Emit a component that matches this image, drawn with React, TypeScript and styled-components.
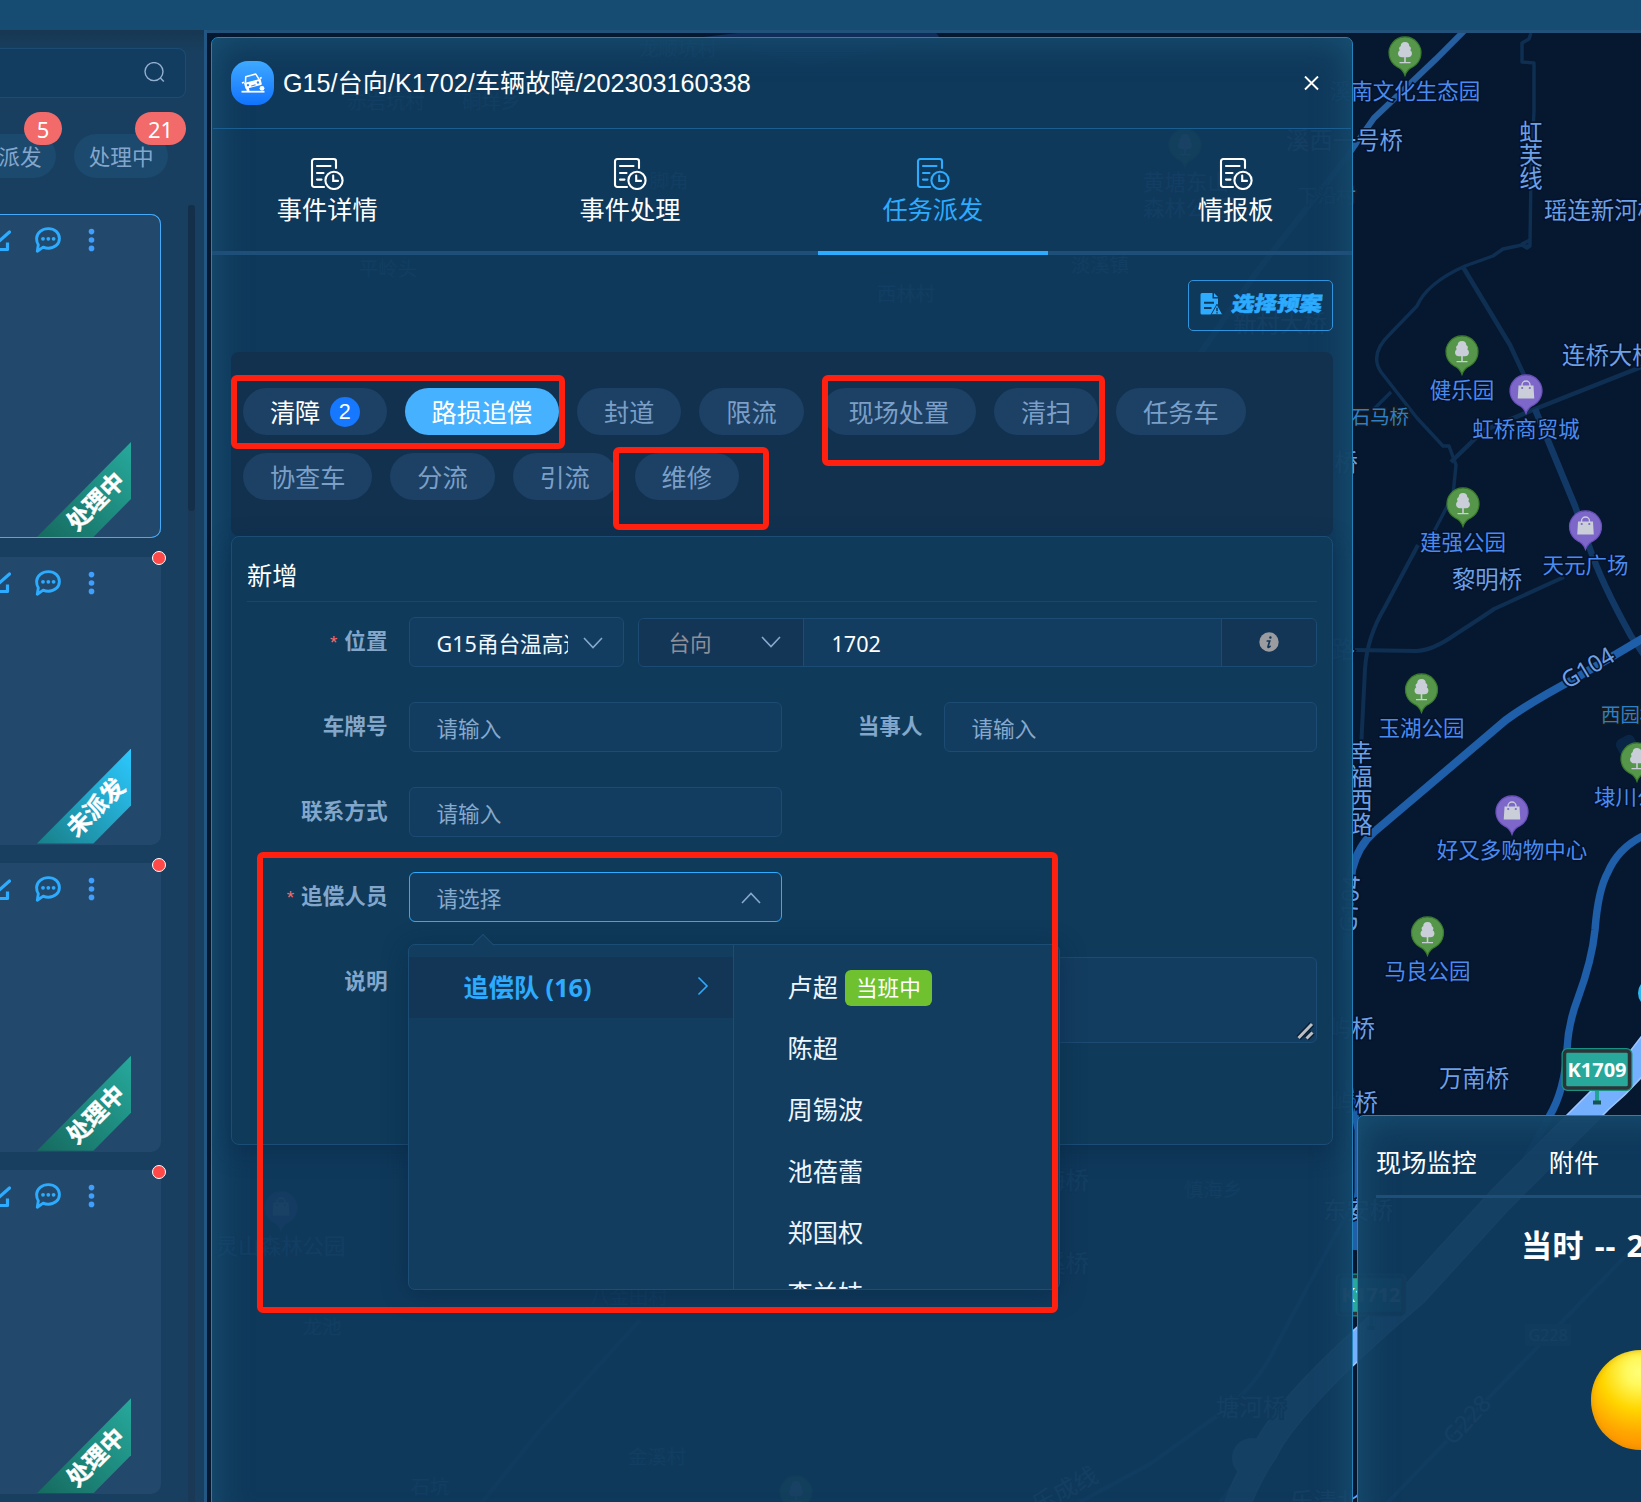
import React from "react";
import styled, { createGlobalStyle, css } from "styled-components";

const CJK = `"Noto Sans", "Noto Sans CJK SC", sans-serif`;
const ARIAL = `"Liberation Sans", "Noto Sans CJK SC", sans-serif`;

const GlobalStyle = createGlobalStyle`
  * { box-sizing: border-box; }
  body { margin: 0; background: #061830; font-family: ${CJK}; color: #fff; }
`;

/* ---------- page frame ---------- */

const Page = styled.div`
  position: relative;
  display: flex;
  flex-direction: column;
  width: 1641px;
  height: 1502px;
  overflow: hidden;
`;

const TopBar = styled.header`
  flex: none;
  height: 30px;
  background: #164b72;
`;

const Body = styled.div`
  flex: 1;
  display: flex;
  min-height: 0;
`;

/* ---------- sidebar ---------- */

const Sidebar = styled.aside`
  flex: none;
  display: flex;
  flex-direction: column;
  width: 207px;
  border-right: 3px solid #225784;
  background: linear-gradient(#173753 0, #183f5f 22px);
  overflow: hidden;
`;

const SearchBox = styled.div`
  flex: none;
  display: flex;
  align-items: center;
  justify-content: flex-end;
  width: 186px;
  height: 50px;
  margin-top: 18px;
  padding-right: 20px;
  padding-bottom: 1px;
  border: 1px solid #1c4c74;
  border-left: 0;
  border-radius: 0 8px 8px 0;
  background: #133d60;
`;

const StatusRow = styled.div`
  flex: none;
  display: flex;
  gap: 18px;
  margin: 36px 0 0 -26px;
`;

const StatusPill = styled.div<{ $w: number }>`
  position: relative;
  width: ${(p) => p.$w}px;
  height: 44px;
  padding-right: 14.500px;
  border-radius: 22px;
  background: #1c496e;
  color: #84a6cc;
  font-size: 21.6px;
  line-height: 46px;
  text-align: right;
  white-space: nowrap;
`;

const CountBadge = styled.span<{ $w: number; $right: number }>`
  position: absolute;
  top: -22px;
  right: ${(p) => p.$right}px;
  width: ${(p) => p.$w}px;
  height: 33px;
  border-radius: 17px;
  background: #f26a6a;
  color: #fff;
  font-size: 22px;
  line-height: 34px;
  text-align: center;
`;

const ListArea = styled.div`
  flex: 1;
  display: flex;
  justify-content: space-between;
  min-height: 0;
  padding-right: 9px;
  margin-top: 27px;
`;

const CardList = styled.div`
  display: flex;
  flex-direction: column;
  gap: 18.6px;
  padding-top: 9px;
`;

const Card = styled.article<{ $h: number; $active?: boolean }>`
  position: relative;
  flex: none;
  width: 161px;
  height: ${(p) => p.$h}px;
  border-radius: 0 10px 10px 0;
  background: #22496c;
  ${(p) =>
    p.$active &&
    css`
      box-shadow: inset -1px 0 0 #45aaf8, inset 0 1px 0 #45aaf8, inset 0 -1px 0 #45aaf8;
    `}
`;

const CardTools = styled.div`
  display: flex;
  align-items: center;
  gap: 24px;
  height: 52px;
  margin-left: -13px;
`;

const Ribbon = styled.div<{ $kind: "doing" | "todo" }>`
  position: absolute;
  left: 37px;
  bottom: 1px;
  display: flex;
  align-items: center;
  justify-content: center;
  width: 94px;
  height: 95px;
  overflow: hidden;
  clip-path: polygon(0 100%, 100% 0, 100% 60%, 60% 100%);
  background: ${(p) =>
    p.$kind === "doing"
      ? "linear-gradient(45deg, #166a5f, #26a99c)"
      : "linear-gradient(45deg, #187f88, #2cc8ff)"};
`;

const RibbonText = styled.span`
  font-size: 23.500px;
  font-weight: 700;
  line-height: 24px;
  white-space: nowrap;
  -webkit-text-stroke: 0.4px #fff;
  transform: translate(11px, 11px) rotate(-45deg);
`;

const AlertDot = styled.i`
  position: absolute;
  top: -5.500px;
  right: -5px;
  width: 14px;
  height: 14px;
  border: 1.4px solid #fff;
  border-radius: 50%;
  background: #ff4949;
`;

const ScrollTrack = styled.div`
  width: 7px;
  background: #193956;
`;

const ScrollThumb = styled.div`
  height: 306px;
  border-radius: 4px;
  background: #142f49;
`;

/* ---------- stage ---------- */

const Stage = styled.main`
  position: relative;
  flex: 1;
  border-top: 3px solid #22517a;
  overflow: hidden;
`;

const MapCanvas = styled.svg`
  position: absolute;
  inset: 0;
  width: 1434px;
  height: 1469px;
`;

const Panel = styled.section<{ $x: number; $y: number; $w: number; $h: number }>`
  position: absolute;
  left: ${(p) => p.$x}px;
  top: ${(p) => p.$y}px;
  width: ${(p) => p.$w}px;
  height: ${(p) => p.$h}px;
  border: 1px solid #2583bb;
  border-radius: 7px;
  background: rgba(16, 59, 93, 0.955);
  box-shadow: inset 0 0 36px #1a5578;
`;

const DialogHead = styled.div`
  display: flex;
  align-items: center;
  height: 91px;
  padding: 0 32px 0 18px;
  margin: 0 1px;
  border-bottom: 1px solid #1b5e91;
`;

const HeadIcon = styled.div`
  display: flex;
  align-items: center;
  justify-content: center;
  width: 43px;
  height: 44px;
  border-radius: 17px;
  background: linear-gradient(#3fa9ff, #1173ff);
`;

const HeadTitle = styled.h1`
  flex: 1;
  margin: 0 0 0 9px;
  font: 400 25.2px/36px ${ARIAL};
`;

const Tabs = styled.nav`
  display: flex;
  gap: 72.4px;
  height: 126px;
  box-shadow: inset 0 -4px 0 #1e4f78;
  overflow: hidden;
`;

const Tab = styled.button<{ $active?: boolean }>`
  flex: none;
  display: flex;
  flex-direction: column;
  align-items: center;
  width: 230.4px;
  padding: 28px 0 0;
  border: 0;
  border-bottom: 4px solid ${(p) => (p.$active ? "#2dabff" : "transparent")};
  background: none;
  color: ${(p) => (p.$active ? "#2dabff" : "#fff")};
  font: 400 25.2px/36px ${CJK};
`;

const TabLabel = styled.span`
  margin-top: 1px;
`;

const Toolbar = styled.div`
  display: flex;
  justify-content: flex-end;
  padding: 25px 19px 21px;
`;

const PlanButton = styled.button`
  display: flex;
  align-items: center;
  gap: 9px;
  width: 145px;
  height: 51px;
  padding: 0 0 4px 11px;
  border: 1px solid #2f93de;
  border-radius: 5px;
  background: none;
  color: #2dabff;
  font: 900 22.6px/30px ${CJK};
  white-space: nowrap;
`;

const PlanText = styled.span`
  -webkit-text-stroke: 0.6px #2dabff;
  transform: skewX(-10deg) scaleY(0.9);
`;

const TagTray = styled.div`
  display: flex;
  flex-wrap: wrap;
  align-content: flex-start;
  gap: 18px;
  height: 184px;
  margin: 0 19px;
  padding: 36px 12px 0;
  border-radius: 8px;
  background: #11314f;
`;

const TagPill = styled.button<{ $tone?: "active" | "lit" }>`
  display: flex;
  align-items: center;
  gap: 9.500px;
  height: 47px;
  padding: 0 26.900px;
  border: 0;
  border-radius: 24px;
  background: ${(p) => (p.$tone === "active" ? "#45b1ff" : "#1c4165")};
  color: ${(p) => (p.$tone ? "#fff" : "#7b9fc7")};
  font: 400 25.2px/46px ${CJK};
  white-space: nowrap;
`;

const TagCount = styled.span`
  width: 30px;
  height: 30px;
  border-radius: 15px;
  background: #1677ff;
  font: 400 21.6px/30px ${ARIAL};
  text-align: center;
`;

/* ---------- form ---------- */

const FormCard = styled.div`
  height: 609px;
  margin: 0 19px;
  padding: 0 15px;
  border: 1px solid #1c4d75;
  border-radius: 8px;
  background: #0f3a5a;
  box-shadow: 0 7px 22px rgba(10, 40, 70, 0.5);
`;

const FormTitle = styled.h2`
  height: 65px;
  margin: 0 0 15px;
  border-bottom: 1px solid #1a4769;
  font-size: 25.2px;
  font-weight: 400;
  line-height: 76px;
`;

const FormRow = styled.div`
  display: flex;
  margin-bottom: 35px;
`;

const Field = styled.div<{ $wide?: boolean }>`
  display: flex;
  gap: 21px;
  width: ${(p) => (p.$wide ? 1070 : 535)}px;
`;

const Label = styled.label<{ $required?: boolean }>`
  flex: none;
  width: 140.500px;
  color: #83a7ca;
  font-size: 21.6px;
  font-weight: 700;
  line-height: 48px;
  text-align: right;
  ${(p) =>
    p.$required &&
    css`
      &::before {
        content: "*";
        margin-right: 7px;
        color: #f56c6c;
        font: 400 19px/20px ${ARIAL};
      }
    `}
`;

const Control = styled.div<{ $open?: boolean; $tall?: boolean }>`
  position: relative;
  flex: 1;
  display: flex;
  align-items: center;
  justify-content: space-between;
  height: ${(p) => (p.$tall ? 86 : 50)}px;
  padding: 1px 20px 0 27px;
  border: 1px solid ${(p) => (p.$open ? "#2dabff" : "#1c4b73")};
  border-radius: 6px;
  background: #133d60;
  color: #86a9cd;
  font-size: 21.6px;
`;

const LocationGroup = styled.div`
  flex: 1;
  display: flex;
  gap: 14px;
`;

const RoadSelect = styled(Control)`
  flex: none;
  width: 215px;
  color: #f2f8ff;
`;

const Clip = styled.span`
  width: 131px;
  overflow: hidden;
  white-space: nowrap;
`;

const Joined = styled.div`
  flex: 1;
  display: flex;
  height: 49px;
  margin-top: 1px;
  border: 1px solid #1c4b73;
  border-radius: 6px;
  background: #133d60;
  overflow: hidden;
  font-size: 21.6px;
`;

const Prepend = styled.div`
  display: flex;
  align-items: center;
  justify-content: space-between;
  width: 165px;
  padding: 0 22px 2px 30px;
  border-right: 1px solid #1c4b73;
  background: #133657;
  color: #8d8f98;
`;

const Mileage = styled.div`
  flex: 1;
  padding-left: 28px;
  line-height: 49px;
`;

const Append = styled.div`
  display: flex;
  align-items: center;
  justify-content: center;
  width: 95px;
  padding-bottom: 2px;
  border-left: 1px solid #1c4b73;
  background: #133657;
`;

const Grip = styled.svg`
  position: absolute;
  right: 0;
  bottom: 1px;
`;

/* ---------- cascader ---------- */

const Cascader = styled.div`
  position: absolute;
  z-index: 3;
  left: -2px;
  top: 71px;
  display: flex;
  width: 652px;
  height: 346px;
  border: 1px solid #1c4d75;
  border-radius: 7px;
  background: #133d5f;
  box-shadow: 0 4px 26px rgba(9, 34, 60, 0.45);
  color: #eef6ff;
  font-size: 25.2px;
  &::before {
    content: "";
    position: absolute;
    left: 66px;
    top: -8px;
    width: 15px;
    height: 15px;
    border: 1px solid #1c4d75;
    border-right: 0;
    border-bottom: 0;
    background: linear-gradient(135deg, #133d5f 50%, transparent 50%);
    transform: rotate(45deg);
  }
`;

const TeamColumn = styled.div`
  width: 325px;
  padding-top: 12px;
  border-right: 1px solid #1c4d75;
`;

const TeamItem = styled.div`
  display: flex;
  align-items: center;
  justify-content: space-between;
  height: 61px;
  padding: 0 20px 3px 55px;
  background: #133657;
  color: #2dabff;
  font-weight: 700;
`;

const PersonColumn = styled.div`
  flex: 1;
  padding-top: 12px;
  overflow: hidden;
`;

const Person = styled.div`
  display: flex;
  align-items: center;
  gap: 7px;
  height: 61.2px;
  padding-left: 54px;
  line-height: 61px;
`;

const DutyTag = styled.span`
  width: 87px;
  height: 36px;
  border-radius: 6px;
  background: #6fc130;
  font-size: 21.6px;
  line-height: 36px;
  text-align: center;
  color: #fff;
`;

/* ---------- monitor panel ---------- */

const MonitorTabs = styled.div`
  display: flex;
  gap: 72px;
  height: 82px;
  margin-left: 18px;
  border-bottom: 3px solid #1e4f78;
  font-size: 25.2px;
  line-height: 92px;
  white-space: nowrap;
`;

const WeatherTitle = styled.div`
  margin: 27px 0 0 163px;
  font-size: 31px;
  font-weight: 700;
  line-height: 40px;
  letter-spacing: 0.6px;
  word-spacing: 2px;
  white-space: nowrap;
`;

const Sun = styled.div`
  width: 100px;
  height: 100px;
  margin: 85px 0 0 233px;
  border-radius: 50%;
  background: radial-gradient(circle at 48% 22%, #ffff78 0, #fff95c 14%, #ffd600 40%, #ffa600 66%, #ff9500 80%, #ee9000 100%);
  box-shadow: inset 0 0 6px rgba(190, 140, 0, 0.55);
`;

/* ---------- annotations ---------- */

const Mark = styled.div<{ $x: number; $y: number; $w: number; $h: number }>`
  position: absolute;
  z-index: 10;
  left: ${(p) => p.$x}px;
  top: ${(p) => p.$y}px;
  width: ${(p) => p.$w}px;
  height: ${(p) => p.$h}px;
  border: 6px solid #ff2010;
  border-radius: 6px;
  pointer-events: none;
`;

/* ---------- icons ---------- */

const SearchIcon = () => (
  <svg width="21" height="21" viewBox="0 0 21 21" fill="none" stroke="#93b0d0" strokeWidth="1.4">
    <circle cx="10" cy="9.6" r="9" />
    <path d="M16.4 16l3.4 3.6" />
  </svg>
);

const EditIcon = () => (
  <svg width="24" height="25" viewBox="0 0 24 25" fill="none" stroke="#2dabff" strokeWidth="3.200">
    <path d="M12 4H4v17.500h16.500v-7" strokeLinejoin="round" />
    <path d="M10.500 14.500L22.500 4" strokeLinecap="round" />
  </svg>
);

const ChatIcon = () => (
  <svg width="26" height="26" viewBox="0 0 26 26">
    <path
      d="M13.400 1.600C19.600 1.600 24.400 5.700 24.400 11.400S19.600 21.200 13.400 21.200c-2 0-3.700-.4-5.200-1.100L2.300 24.200l1-6.400C2.200 16 1.600 13.800 1.600 11.400 1.800 5.700 7.200 1.600 13.400 1.600z"
      fill="none"
      stroke="#2dabff"
      strokeWidth="2.9"
      strokeLinejoin="round"
    />
    <g fill="#2dabff">
      <circle cx="8" cy="11.800" r="1.900" />
      <circle cx="13.300" cy="11.800" r="1.900" />
      <circle cx="18.600" cy="11.800" r="1.900" />
    </g>
  </svg>
);

const MoreIcon = () => (
  <svg width="12" height="24" viewBox="-3 0 12 24" fill="#409eff">
    <circle cx="3.500" cy="3.600" r="2.800" />
    <circle cx="3.500" cy="12" r="2.800" />
    <circle cx="3.500" cy="20.400" r="2.800" />
  </svg>
);

const CarIcon = () => (
  <svg width="24" height="20" viewBox="0 0 24 20" fill="none" stroke="#fff">
    <path d="M.5 18.700h23" strokeWidth="1.800" />
    <circle cx="21" cy="15.300" r="2.400" fill="#fff" stroke="none" />
    <g transform="rotate(-15 11 9)">
      <path d="M4.500 8L6.300 2.300h10.400L18.500 8" strokeWidth="1.500" strokeLinejoin="round" />
      <path d="M3 8h17v5.200a1 1 0 0 1-1 1H4a1 1 0 0 1-1-1z" fill="#fff" stroke="none" />
      <path d="M1 7.300h2.500M21.500 7.300h-2" strokeWidth="1.600" />
      <path d="M5 13.500v3.300" strokeWidth="2.800" />
      <circle cx="6.300" cy="11" r="1.200" fill="#2a8cff" stroke="none" />
      <circle cx="16.600" cy="11" r="1.200" fill="#2a8cff" stroke="none" />
      <path d="M9.300 12.600h4.400" stroke="#2a8cff" strokeWidth="1" />
    </g>
  </svg>
);

const DocClockIcon = () => (
  <svg width="34" height="33" viewBox="0 0 34 33" fill="none" stroke="currentColor" strokeWidth="2.100" strokeLinecap="round">
    <path d="M14 30H4.200A2.200 2.200 0 0 1 2 27.800V4.200A2.200 2.200 0 0 1 4.200 2h19.600A2.200 2.200 0 0 1 26 4.200V11" />
    <path d="M7 9h13.500M7 16h6.500M7 22.600h4.500" />
    <circle cx="24" cy="23.400" r="8.600" />
    <path d="M23.200 18.600v5.300h4.800" />
  </svg>
);

const PlanIcon = () => (
  <svg width="23" height="24" viewBox="0 0 23 24">
    <path d="M2 1h10.500v5.500H18V13l-5 9.500H2A1.500 1.500 0 0 1 .5 21V2.500A1.500 1.500 0 0 1 2 1z" fill="currentColor" />
    <path d="M14 1l4 4h-4z" fill="currentColor" />
    <path d="M4 10.800h10M4 16h7.500" stroke="#0f3a5b" strokeWidth="2" />
    <path d="M17 12.200L22.800 22.800H11z" fill="currentColor" stroke="#0f3a5b" strokeWidth="1" />
    <path d="M17 15.800v3.400M17 20.300v1.300" stroke="#0f3a5b" strokeWidth="1.500" />
  </svg>
);

const CloseIcon = () => (
  <svg width="15" height="15" viewBox="0 0 15 15" stroke="#fff" strokeWidth="1.900">
    <path d="M1 .5l13 13M14 .5L1 13.500" />
  </svg>
);

const Chevron = ({ dir = "down", color = "#86a9cd" }: { dir?: "down" | "up" | "right"; color?: string }) => {
  const d = { down: "M1 5l9 9.500L19 5", up: "M1 15l9-9.500L19 15", right: "M5.500 1.500l8.500 8.500-8.500 8.500" }[dir];
  return (
    <svg width="20" height="20" viewBox="0 0 20 20" fill="none" stroke={color} strokeWidth="1.600">
      <path d={d} />
    </svg>
  );
};

const InfoIcon = () => (
  <svg width="20" height="20" viewBox="0 0 20 20">
    <circle cx="10" cy="10" r="9.700" fill="#9b9ca0" />
    <g stroke="#133657" strokeLinecap="round" fill="none">
      <circle cx="11.400" cy="5.400" r=".6" strokeWidth="1.300" />
      <path d="M8.300 9h2.400l-1.700 5.600q-.2 1 .8.7l1.300-1" strokeWidth="1.700" />
    </g>
  </svg>
);

/* ---------- map ---------- */

type Tone = "poi" | "bridge" | "village";
const toneStyle: Record<Tone, { size: number; fill: string; halo: string }> = {
  poi: { size: 21.5, fill: "#4a8bf0", halo: "#04122a" },
  bridge: { size: 23.4, fill: "#6da0e6", halo: "#04122a" },
  village: { size: 19.4, fill: "#2c80c8", halo: "#15181d" },
};

const MapText = ({ x, y, t, tone, anchor = "middle" }: { x: number; y: number; t: string; tone: Tone; anchor?: "start" | "middle" | "end" }) => {
  const s = toneStyle[tone];
  return (
    <text x={x} y={y - 0.7 + s.size * 0.37} fontSize={s.size} fill={s.fill} stroke={s.halo} strokeWidth="3" paintOrder="stroke" textAnchor={anchor}>
      {t}
    </text>
  );
};

const Pin = ({ x, y, kind, label }: { x: number; y: number; kind: "park" | "mall"; label?: string }) => {
  const park = kind === "park";
  return (
    <g>
      <g transform={`translate(${x} ${y})`}>
        <path
          d="M0 22.500C-2 17-4.500 15.600-8 13.800A16 16 0 1 1 8 13.800C4.500 15.600 2 17 0 22.500z"
          fill={park ? "#55964a" : "#7d67c8"}
          stroke={park ? "#3a7a2c" : "#6a50bd"}
          strokeWidth="1.200"
        />
        {park ? (
          <path d="M0-11c-3 0-4.500 2-4.200 4-2 1.200-2.200 3-1 4.300C-8-1-7.500 4.300-3 4.300h2.200V9H-5.500v1.200h11V9H.8V4.300H3C7.500 4.300 8-1 5.200-2.700 6.400-4 6.200-5.800 4.200-7 4.500-9 3-11 0-11z" fill="#c9ced8" />
        ) : (
          <g>
            <path d="M-4-4.500V-6a4 4 0 0 1 8 0v1.500" fill="none" stroke="#c9ced8" strokeWidth="1.400" />
            <path d="M-7.500-5.500h15L8.300 7.500H-8.300z" fill="#c9ced8" />
            <circle cx="-3.800" cy="-3" r="1.100" fill="#7d67c8" />
            <circle cx="3.800" cy="-3" r="1.100" fill="#7d67c8" />
          </g>
        )}
      </g>
      {label && <MapText x={x} y={y + 39} t={label} tone="poi" />}
    </g>
  );
};

const VerticalName = ({ x, y, step, t }: { x: number; y: number; step: number; t: string }) => (
  <g>
    {[...t].map((c, i) => (
      <MapText key={i} x={x} y={y + i * step} t={c} tone="bridge" />
    ))}
  </g>
);

const Milestone = ({ x, y, t }: { x: number; y: number; t: string }) => (
  <g>
    <path d={`M${x} ${y + 20}v13`} stroke="#22a596" strokeWidth="4" />
    <path d={`M${x - 4} ${y + 33}h8`} stroke="#14564f" strokeWidth="4" />
    <rect x={x - 35.5} y={y - 21.5} width="71" height="43" rx="6" fill="#1b9184" />
    <rect x={x - 32.5} y={y - 18.5} width="65" height="37" rx="3" fill="#27a89a" stroke="#2b3437" strokeWidth="3.500" />
    <text x={x} y={y + 7.3} fontSize="20" fontWeight="700" fill="#fff" textAnchor="middle">
      {t}
    </text>
  </g>
);

const MapLayer = () => (
  <MapCanvas viewBox="207 33 1434 1469" fontFamily={CJK}>
    <g fill="none" stroke="#0f2f52" strokeWidth="3.400" strokeLinejoin="round">
      <path d="M1531 33l-2 6-7 4v19l12 1v48l-3 60-1 73-3 3-5-3 8-4v6l-3 2-5-3-19 4-10 7-28 10q-38 17-48 40l-27 28q-21 20-9 38l36 46 26 28h6l7 19-3 30-27 52" />
      <path d="M1463 267l47 78 14 30" strokeWidth="4.500" />
      <path d="M1641 367l-106 42-52 22-32 31" strokeWidth="4.500" />
      <path d="M1391 392l-17 17" />
      <path d="M1418 545l-33 62q-18 30-20 62l-4 80" strokeWidth="4" />
      <path d="M1355 650l61 1q16 0 40-17 28-18 38-25l70-32" strokeWidth="4" />
      <path d="M1535 409l40 97 14 40q12 36 42 90l18 26" stroke="#123966" strokeWidth="6.500" />
    </g>
    <path d="M1467 28l-31 31-62 59-28 40-90 115-76 110" fill="none" stroke="#255f9f" strokeWidth="6" />
    <path d="M703 37l52-6h180l4 6-130 30z" fill="#0f2d58" />
    <path d="M1652 633l-76 45q-47 25-70 42l-132 112q-16 14-22 38l-6 90" fill="none" stroke="#1f5ea8" strokeWidth="8" />
    <path d="M1348 1080l10 50v60l-4 60" fill="none" stroke="#1f5ea8" strokeWidth="7" />
    <path d="M1652 832q-32 12-44 40-10 18-13 58-3 30-17 68-10 26-11 52-2 40-18 67l-60 110" fill="none" stroke="#1f5ea8" strokeWidth="7.500" />
    <path d="M1354 1200l-80 150q-20 40-60 68l-64 46-70 38" fill="none" stroke="#1f5ea8" strokeWidth="4" />
    <path d="M1641 1240l-280 290M1300 1400l-80 102" fill="none" stroke="#1f5ea8" strokeWidth="4" />
    <path d="M640 1320L540 1430l-80 100" fill="none" stroke="#1f4f88" strokeWidth="4" />
    <path d="M1665 1024q-28 45-65 76l-100 100-85 93q-70 60-105 98t-45 60q-18 26-30 60" fill="none" stroke="#9cc4ff" strokeWidth="27" />
    <path d="M1665 1024q-28 45-65 76l-100 100-85 93q-70 60-105 98t-45 60q-18 26-30 60" fill="none" stroke="#75b0ff" strokeWidth="24" />
    <circle cx="1252" cy="1458" r="20" fill="#75b0ff" />
    <rect x="1618" y="737" width="20" height="24" rx="6" fill="#0a2647" transform="rotate(-28 1626 748)" />
    <circle cx="1653" cy="993" r="15" fill="#2cb5f0" />

    <Pin x={1405} y={53} kind="park" label="溪南文化生态园" />
    <Pin x={1462} y={352} kind="park" label="健乐园" />
    <Pin x={1526} y={391} kind="mall" label="虹桥商贸城" />
    <Pin x={1463} y={504} kind="park" label="建强公园" />
    <Pin x={1585.5} y={527} kind="mall" label="天元广场" />
    <Pin x={1421.5} y={690} kind="park" label="玉湖公园" />
    <Pin x={1637} y={759} kind="park" label="埭川公园" />
    <Pin x={1512} y={812} kind="mall" label="好又多购物中心" />
    <Pin x={1427.5} y={933} kind="park" label="马良公园" />
    <Pin x={1185} y={145} kind="park" />
    <Pin x={281} y={1208} kind="mall" label="灵山森林公园" />
    <Pin x={796} y={1492} kind="park" />

    <MapText x={1403} y={141} t="溪西一号桥" tone="bridge" anchor="end" />
    <MapText x={1544} y={211} t="瑶连新河桥" tone="bridge" anchor="start" />
    <MapText x={1562} y={356} t="连桥大桥" tone="bridge" anchor="start" />
    <MapText x={1487} y={580} t="黎明桥" tone="bridge" />
    <MapText x={1358} y={463} t="桥" tone="bridge" anchor="end" />
    <MapText x={1355} y={650} t="路" tone="bridge" anchor="end" />
    <MapText x={1375} y={1029} t="屿桥" tone="bridge" anchor="end" />
    <MapText x={1378} y={1103} t="屿桥" tone="bridge" anchor="end" />
    <MapText x={1474} y={1079} t="万南桥" tone="bridge" />
    <MapText x={1358} y={1211} t="东安桥" tone="bridge" />
    <MapText x={1089} y={1181} t="海桥" tone="bridge" anchor="end" />
    <MapText x={1089} y={1264} t="溪桥" tone="bridge" anchor="end" />
    <MapText x={1251} y={1408} t="塘河桥" tone="bridge" />
    <MapText x={1280} y={324} t="新村大桥" tone="bridge" />
    <MapText x={1356} y={197} t="下沿村" tone="village" anchor="end" />
    <MapText x={1409} y={418} t="石马桥" tone="village" anchor="end" />
    <MapText x={1601} y={716} t="西园村" tone="village" anchor="start" />
    <MapText x={678} y={50} t="龙顺坑村" tone="village" />
    <MapText x={386} y={103} t="赤岩坑村" tone="village" />
    <MapText x={491} y={103} t="硐垟乡" tone="village" />
    <MapText x={669} y={182} t="脚角" tone="village" />
    <MapText x={388} y={270} t="平岭头" tone="village" />
    <MapText x={906} y={295} t="西林村" tone="village" />
    <MapText x={1100} y={266} t="淡溪镇" tone="village" />
    <MapText x={1186} y={183} t="黄塘东山" tone="poi" />
    <MapText x={1186} y={209} t="森林公园" tone="poi" />
    <MapText x={1213} y={1191} t="慎海乡" tone="village" />
    <MapText x={629} y={1298} t="八金田村" tone="village" />
    <MapText x={657} y={1458} t="金溪村" tone="village" />
    <MapText x={430} y={1488} t="石坑" tone="village" />
    <MapText x={322} y={1328} t="龙池" tone="village" />
    <MapText x={1290} y={1502} t="乐清北" tone="bridge" anchor="start" />
    <g transform="rotate(-28 1065 1490)">
      <MapText x={1065} y={1490} t="乐成线" tone="bridge" />
    </g>

    <VerticalName x={1531} y={133} step={23} t="虹芙线" />
    <VerticalName x={1361} y={753} step={24} t="幸福西路" />
    <g transform="rotate(-31 1588 668)">
      <MapText x={1588} y={668} t="G104" tone="bridge" />
    </g>
    <g transform="rotate(-86 1350 904)">
      <MapText x={1350} y={904} t="G104" tone="bridge" />
    </g>
    <g transform="rotate(-47 1467 1420)">
      <MapText x={1467} y={1420} t="G228" tone="bridge" />
    </g>
    <rect x="1525" y="1324" width="46" height="22" fill="#3f4653" />
    <text x="1548" y="1341" fontSize="16" fill="#9aa6b8" textAnchor="middle">
      G228
    </text>
    <Milestone x={1597} y={1069.5} t="K1709" />
    <Milestone x={1371} y={1295} t="K1712" />
  </MapCanvas>
);

/* ---------- sections ---------- */

const cards: { h: number; active?: boolean; kind: "doing" | "todo"; text: string }[] = [
  { h: 324, active: true, kind: "doing", text: "处理中" },
  { h: 288, kind: "todo", text: "未派发" },
  { h: 288.5, kind: "doing", text: "处理中" },
  { h: 324, kind: "doing", text: "处理中" },
];

const EventSidebar = () => (
  <Sidebar>
    <SearchBox>
      <SearchIcon />
    </SearchBox>
    <StatusRow>
      <StatusPill $w={82}>
        未派发
        <CountBadge $w={38} $right={-6}>5</CountBadge>
      </StatusPill>
      <StatusPill $w={94}>
        处理中
        <CountBadge $w={51} $right={-18}>21</CountBadge>
      </StatusPill>
    </StatusRow>
    <ListArea>
      <CardList>
        {cards.map((c, i) => (
          <Card key={i} $h={c.h} $active={c.active}>
            <CardTools>
              <EditIcon />
              <ChatIcon />
              <MoreIcon />
            </CardTools>
            <Ribbon $kind={c.kind}>
              <RibbonText>{c.text}</RibbonText>
            </Ribbon>
            {!c.active && <AlertDot />}
          </Card>
        ))}
      </CardList>
      <ScrollTrack>
        <ScrollThumb />
      </ScrollTrack>
    </ListArea>
  </Sidebar>
);

const tabs = ["事件详情", "事件处理", "任务派发", "情报板"];
const tags: { t: string; n?: number; tone?: "active" | "lit" }[] = [
  { t: "清障", n: 2, tone: "lit" },
  { t: "路损追偿", tone: "active" },
  { t: "封道" },
  { t: "限流" },
  { t: "现场处置" },
  { t: "清扫" },
  { t: "任务车" },
  { t: "协查车" },
  { t: "分流" },
  { t: "引流" },
  { t: "维修" },
];
const people = ["卢超", "陈超", "周锡波", "池蓓蕾", "郑国权", "李兰妹"];

const DispatchForm = () => (
  <FormCard>
    <FormTitle>新增</FormTitle>
    <FormRow>
      <Field $wide>
        <Label $required>位置</Label>
        <LocationGroup>
          <RoadSelect>
            <Clip>G15甬台温高速</Clip>
            <Chevron />
          </RoadSelect>
          <Joined>
            <Prepend>
              台向
              <Chevron />
            </Prepend>
            <Mileage>1702</Mileage>
            <Append>
              <InfoIcon />
            </Append>
          </Joined>
        </LocationGroup>
      </Field>
    </FormRow>
    <FormRow>
      <Field>
        <Label>车牌号</Label>
        <Control>请输入</Control>
      </Field>
      <Field>
        <Label>当事人</Label>
        <Control>请输入</Control>
      </Field>
    </FormRow>
    <FormRow>
      <Field>
        <Label>联系方式</Label>
        <Control>请输入</Control>
      </Field>
    </FormRow>
    <FormRow>
      <Field>
        <Label $required>追偿人员</Label>
        <Control $open>
          请选择
          <Chevron dir="up" />
          <Cascader>
            <TeamColumn>
              <TeamItem>
                追偿队 (16)
                <Chevron dir="right" color="#2dabff" />
              </TeamItem>
            </TeamColumn>
            <PersonColumn>
              {people.map((name, i) => (
                <Person key={name}>
                  {name}
                  {i === 0 && <DutyTag>当班中</DutyTag>}
                </Person>
              ))}
            </PersonColumn>
          </Cascader>
        </Control>
      </Field>
    </FormRow>
    <FormRow>
      <Field $wide>
        <Label>说明</Label>
        <Control $tall>
          <Grip width="20" height="20" viewBox="0 0 20 20">
            <path d="M2.500 17L16 3M10.500 17.500L16.500 11.500" stroke="#0a1f33" strokeWidth="6" />
            <path d="M2.500 17L16 3M10.500 17.500L16.500 11.500" stroke="#b9bfc4" strokeWidth="3" />
          </Grip>
        </Control>
      </Field>
    </FormRow>
  </FormCard>
);

export default function App() {
  return (
    <Page>
      <GlobalStyle />
      <TopBar />
      <Body>
        <EventSidebar />
        <Stage>
          <MapLayer />
          <Panel $x={4} $y={4} $w={1142} $h={1500}>
            <DialogHead>
              <HeadIcon>
                <CarIcon />
              </HeadIcon>
              <HeadTitle>G15/台向/K1702/车辆故障/202303160338</HeadTitle>
              <CloseIcon />
            </DialogHead>
            <Tabs>
              {tabs.map((t, i) => (
                <Tab key={t} $active={i === 2}>
                  <DocClockIcon />
                  <TabLabel>{t}</TabLabel>
                </Tab>
              ))}
            </Tabs>
            <Toolbar>
              <PlanButton>
                <PlanIcon />
                <PlanText>选择预案</PlanText>
              </PlanButton>
            </Toolbar>
            <TagTray>
              {tags.map((g) => (
                <TagPill key={g.t} $tone={g.tone}>
                  {g.t}
                  {g.n && <TagCount>{g.n}</TagCount>}
                </TagPill>
              ))}
            </TagTray>
            <DispatchForm />
          </Panel>
          <Panel $x={1150} $y={1082} $w={568} $h={440}>
            <MonitorTabs>
              <span>现场监控</span>
              <span>附件</span>
            </MonitorTabs>
            <WeatherTitle>当时 -- 2</WeatherTitle>
            <Sun />
          </Panel>
        </Stage>
      </Body>
      <Mark $x={231} $y={375} $w={334} $h={74} />
      <Mark $x={821.5} $y={375} $w={283.5} $h={90.5} />
      <Mark $x={612.5} $y={447} $w={156} $h={83} />
      <Mark $x={257} $y={852} $w={801} $h={460.5} />
    </Page>
  );
}
